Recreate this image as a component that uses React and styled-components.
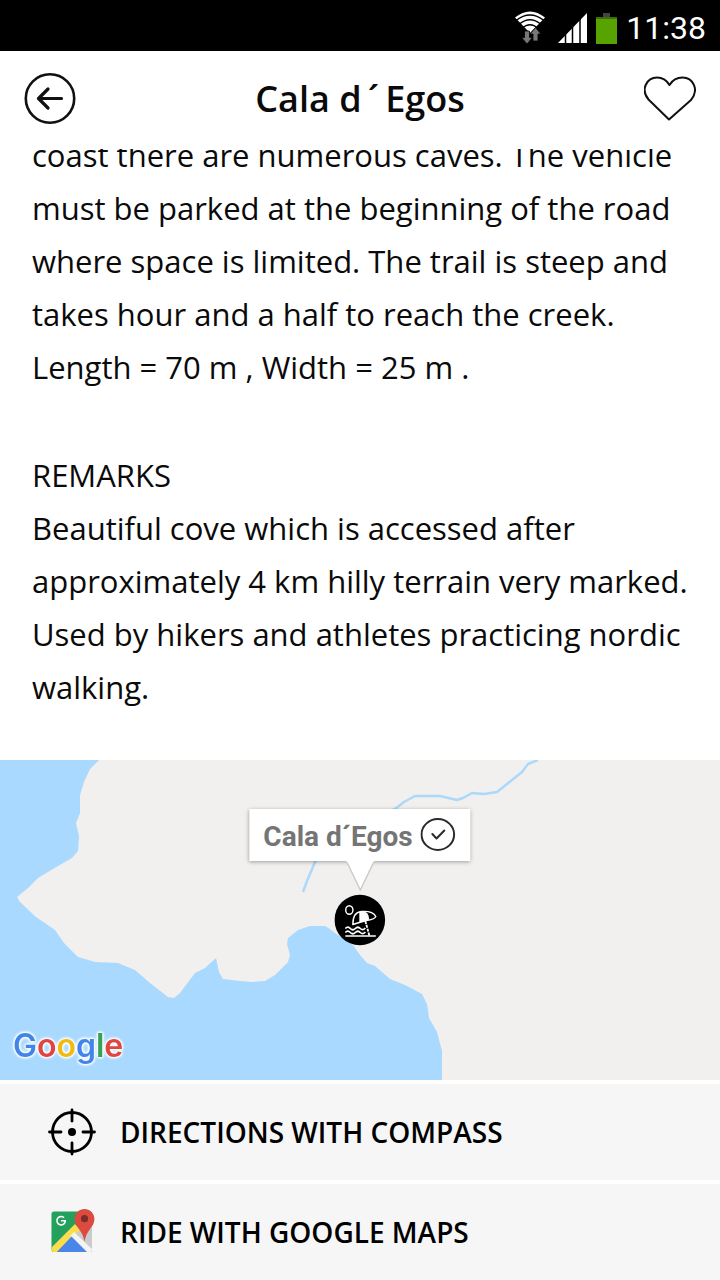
import React from "react";
import styled, { createGlobalStyle } from "styled-components";

const GlobalStyle = createGlobalStyle`
  *, *::before, *::after { box-sizing: border-box; }
  body { margin: 0; background: #fff; }
`;

const Screen = styled.div`
  display: flex;
  flex-direction: column;
  height: 100vh;
  background: #fff;
  color: #0a0a0a;
  font-family: "Open Sans", "Noto Sans", sans-serif;
`;

const StatusBar = styled.div`
  display: flex;
  flex: none;
  align-items: center;
  justify-content: flex-end;
  gap: 9px;
  height: 51px;
  padding: 4px 14px 0 0;
  background: #000;
`;

const Icon = styled.svg`
  display: block;
  flex: none;
`;

const Clock = styled.time`
  color: #fff;
  font-family: Roboto, sans-serif;
  font-size: 32px;
  line-height: 40px;
`;

const Header = styled.header`
  display: grid;
  flex: none;
  grid-template-columns: 52px 1fr 52px;
  align-items: center;
  height: 98px;
  padding: 0 24px 2px;
`;

const IconButton = styled.button`
  display: flex;
  align-items: center;
  justify-content: center;
  width: 52px;
  height: 52px;
  padding: 0;
  border: 0;
  background: none;
  color: #111;
  cursor: pointer;
`;

const Title = styled.h1`
  margin: 0;
  font-size: 36px;
  font-weight: 600;
  line-height: 48px;
  text-align: center;
`;

const Accent = styled.span`
  padding: 0 6px;
`;

const Details = styled.main`
  display: flex;
  flex: 1;
  flex-direction: column;
  justify-content: flex-end;
  gap: 55px;
  min-height: 0;
  overflow: hidden;
  padding: 0 32px 46px;
`;

const Section = styled.section`
  font-size: 31px;
  line-height: 53px;
`;

const SectionTitle = styled.h2`
  margin: 0;
  font-size: 31px;
  font-weight: 400;
  line-height: 53px;
`;

const Text = styled.p`
  margin: 0;
`;

const MapPanel = styled.div`
  position: relative;
  flex: none;
  height: 320px;
  overflow: hidden;
  background: #f1f0ee;
`;

const MapDrawing = styled.svg`
  display: block;
  width: 100%;
  height: 100%;
`;

const Marker = styled.div`
  position: absolute;
  top: 49px;
  left: 50%;
  display: flex;
  flex-direction: column;
  align-items: center;
  transform: translateX(-50%);
`;

const Callout = styled.button`
  display: flex;
  align-items: center;
  gap: 8px;
  height: 52px;
  padding: 0 14px;
  border: 0;
  background: #fff;
  box-shadow: 0 1px 4px rgba(0, 0, 0, 0.35);
  color: #757575;
  font-family: Roboto, sans-serif;
  font-size: 28px;
  font-weight: 700;
  line-height: 32px;
  white-space: nowrap;
  cursor: pointer;
`;

const CalloutLabel = styled.span`
  padding-top: 4px;
`;

const Pin = styled(Icon)`
  margin-top: 3px;
`;

const GoogleMark = styled.div`
  position: absolute;
  bottom: 12px;
  left: 13px;
  font-family: Inter, sans-serif;
  font-size: 32px;
  font-weight: 600;
  line-height: 44px;
  filter: drop-shadow(0 0 1px #fff) drop-shadow(0 0 1px #fff) drop-shadow(0 0 1px #fff);
`;

const Letter = styled.span`
  color: ${(p) => p.$color};
`;

const Actions = styled.nav`
  display: flex;
  flex: none;
  flex-direction: column;
  gap: 4px;
  padding-top: 4px;
`;

const ActionLink = styled.a`
  display: flex;
  align-items: center;
  gap: 24px;
  height: 96px;
  padding: 0 48px;
  background: #f6f6f6;
  color: #000;
  font-size: 28px;
  font-weight: 600;
  line-height: 40px;
  text-decoration: none;
`;

const LOGO = [
  ["G", "#4285e8"],
  ["o", "#e04540"],
  ["o", "#f2b90f"],
  ["g", "#4285e8"],
  ["l", "#35a255"],
  ["e", "#e04540"],
];

function WifiIcon() {
  return (
    <Icon width="34" height="34" viewBox="0 0 34 34" aria-hidden="true">
      <path d="M0 6.500Q15 -5.500 30 6.500L15 22Z" fill="#fff" />
      <g fill="none" stroke="#000" strokeWidth="1.400">
        <path d="M1 9.500Q15 -1.500 29 9.500" />
        <path d="M4 13.300Q15 4 26 13.300" />
        <path d="M7 17.300Q15 10 23 17.300" />
      </g>
      <path d="M9.500 20h5v6.500h3L12 33l-5.500-6.500h3z" fill="#777" stroke="#000" strokeWidth=".8" />
      <path d="M18 30v-7h-3l5.500-6.500L26 23h-3v7z" fill="#777" stroke="#000" strokeWidth=".8" />
    </Icon>
  );
}

function SignalIcon() {
  return (
    <Icon width="29" height="30" viewBox="0 0 29 30" aria-hidden="true">
      <path d="M0 30L29 0V30Z" fill="#fff" />
      <path d="M7.500 18V30M14.500 11V30M22 4V30" stroke="#000" strokeWidth="1.500" />
    </Icon>
  );
}

function BatteryIcon() {
  return (
    <Icon width="21" height="32" viewBox="0 0 21 32" aria-hidden="true">
      <path d="M7 1h7v4H7z" fill="#444" />
      <path d="M0 5h21v2H0z" fill="#3c6d10" />
      <path d="M0 7h21v25H0z" fill="#57a300" />
    </Icon>
  );
}

function BackIcon() {
  return (
    <Icon width="52" height="52" viewBox="0 0 52 52" fill="none" stroke="currentColor" aria-hidden="true">
      <circle cx="26" cy="25.500" r="24.200" strokeWidth="2.600" />
      <path d="M37.500 25.500H15M24 16L14.500 25.500L24 35" strokeWidth="3.200" strokeLinecap="round" strokeLinejoin="round" />
    </Icon>
  );
}

function HeartIcon() {
  return (
    <Icon width="52" height="46" viewBox="0 0 52 46" fill="none" stroke="currentColor" aria-hidden="true">
      <path
        d="M25 43.500L4.500 23.500C-4 13.500 3 1.500 13 1.500C19 1.500 22.500 4 25.500 9C28.500 4 33 1.500 38.500 1.500C49 1.500 55.500 13.500 47 24Z"
        strokeWidth="2"
        strokeLinejoin="round"
      />
    </Icon>
  );
}

function CheckIcon() {
  return (
    <Icon width="36" height="34" viewBox="0 0 36 34" fill="none" stroke="#2b2b2b" aria-hidden="true">
      <ellipse cx="17.500" cy="16.500" rx="16.300" ry="15.400" strokeWidth="2" />
      <path d="M12 16L16.200 20.500L24 12.500" strokeWidth="2" strokeLinecap="round" strokeLinejoin="round" />
    </Icon>
  );
}

function BeachPin() {
  return (
    <Pin width="52" height="52" viewBox="0 0 52 52" aria-hidden="true">
      <circle cx="25.500" cy="26" r="25.300" fill="#000" />
      <g fill="none" stroke="#fff" strokeWidth="1.400" strokeLinejoin="round">
        <ellipse cx="15" cy="16" rx="3.600" ry="4.300" />
        <path d="M18.500 30.500C18.500 23 21.500 18 27 17.500C35 17 40 19.500 41.500 22.500C40 25.500 36 26 32 26.500L25 28.500Z" />
        <path d="M31 27L35 41.500" strokeWidth="1.800" strokeDasharray="3 1" />
        <path d="M11 34.500q2.500-2.500 5 0t5 0t5 0t5-.5M11 38.500q2.500-2.500 5 0t5 0t5 0t5-.5" strokeWidth="1.700" />
        <path d="M11 42H41.500" />
      </g>
      <path d="M25 18C28 16 32 17.500 34 21L35 25.500L25 28.500Z" fill="#fff" />
    </Pin>
  );
}

function CompassIcon() {
  return (
    <Icon width="48" height="48" viewBox="0 0 48 48" fill="none" stroke="#000" aria-hidden="true">
      <circle cx="24" cy="24" r="19.500" strokeWidth="2.800" />
      <path d="M24 2V13M24 35V46M1.500 24H13M35 24H46.500" strokeWidth="2.800" strokeLinecap="round" />
      <circle cx="24" cy="24" r="4" fill="#000" stroke="none" />
    </Icon>
  );
}

function GoogleMapsIcon() {
  return (
    <Icon width="48" height="48" viewBox="0 0 48 48" aria-hidden="true">
      <defs>
        <clipPath id="sheet">
          <rect x="3.500" y="3.500" width="40.500" height="40.500" rx="2.500" />
        </clipPath>
      </defs>
      <g clipPath="url(#sheet)">
        <path d="M3 3H44V46H3Z" fill="#23a05c" />
        <path d="M24 26L31 15H44V46Z" fill="#c9cbcf" />
        <path d="M3 45V40L27 16L32 22L8 45Z" fill="#fbdc4b" />
        <path d="M22 28L26 24L44 41V46H40Z" fill="#f3f3f3" />
        <path d="M7 46L23.500 28.500L41 46Z" fill="#4a86e8" />
      </g>
      <path
        d="M16 9.700A4.200 4.200 0 1 0 17.300 12.700H13"
        fill="none"
        stroke="#fff"
        strokeWidth="1.600"
      />
      <path d="M36.500 34C35.500 27 33 24 29.500 19C22.500 9 29.500 1 36.500 1C43.500 1 50.500 9 43.500 19C40 24 37.500 27 36.500 34Z" fill="#db4b3f" />
      <circle cx="36.500" cy="10.700" r="3.600" fill="#7e2c27" />
    </Icon>
  );
}

function MapView() {
  return (
    <MapPanel>
      <MapDrawing viewBox="0 0 720 320" preserveAspectRatio="xMidYMid slice" role="img" aria-label="Map of the coast">
        <path d="M0 0H720V320H0Z" fill="#f1f0ee" />
        <path
          fill="#a9d9fe"
          d="M0 0H99L90 9L84 22L80 35V53L76 63L79 76L78 91L72 98L58 106L38 118L28 128L17 137L20 142L36 157L55 170L64 183L78 197L95 202L118 203L135 210L150 223L168 237L174 238L180 233L195 213L205 208L216 198L219 212L223 219L240 221L252 222L265 221L275 215L288 202L290 195L287 184L288 178L298 170L310 166L325 166L330 169L335 173L353 185L360 195L367 203L375 206L390 219L405 225L422 234L427 244L429 258L437 272L442 291V320H0Z"
        />
        <path
          fill="none"
          stroke="#abd9fb"
          strokeWidth="2.500"
          strokeLinejoin="round"
          d="M303 132L307 121L315 102L330 75L395 49L404 42L415 36L440 36L457 40L463 38L472 33L484 34L497 32L512 20L522 12L528 4L538 0"
        />
      </MapDrawing>
      <Marker>
        <Callout type="button">
          <CalloutLabel>Cala d´Egos</CalloutLabel>
          <CheckIcon />
        </Callout>
        <Icon width="32" height="30" viewBox="0 0 32 30" aria-hidden="true">
          <path d="M2 0L16 29L30 0" fill="#fff" stroke="#ccc" strokeWidth="1.500" />
          <path d="M2 0H30L28 2H4Z" fill="#fff" />
        </Icon>
        <BeachPin />
      </Marker>
      <GoogleMark>
        {LOGO.map(([letter, color], i) => (
          <Letter key={i} $color={color}>{letter}</Letter>
        ))}
      </GoogleMark>
    </MapPanel>
  );
}

export default function App() {
  return (
    <Screen>
      <GlobalStyle />
      <StatusBar>
        <WifiIcon />
        <SignalIcon />
        <BatteryIcon />
        <Clock>11:38</Clock>
      </StatusBar>
      <Header>
        <IconButton type="button" aria-label="Back">
          <BackIcon />
        </IconButton>
        <Title>Cala d<Accent>´</Accent>Egos</Title>
        <IconButton type="button" aria-label="Add to favourites">
          <HeartIcon />
        </IconButton>
      </Header>
      <Details>
        <Section>
          <Text>
            coast there are numerous caves. The vehicle must be parked at the beginning of the road where
            space is limited. The trail is steep and takes hour and a half to reach the creek.
          </Text>
          <Text>Length = 70 m , Width = 25 m .</Text>
        </Section>
        <Section>
          <SectionTitle>REMARKS</SectionTitle>
          <Text>
            Beautiful cove which is accessed after approximately 4 km hilly terrain very marked. Used by
            hikers and athletes practicing nordic walking.
          </Text>
        </Section>
      </Details>
      <MapView />
      <Actions>
        <ActionLink href="#compass">
          <CompassIcon />
          DIRECTIONS WITH COMPASS
        </ActionLink>
        <ActionLink href="#google-maps">
          <GoogleMapsIcon />
          RIDE WITH GOOGLE MAPS
        </ActionLink>
      </Actions>
    </Screen>
  );
}
